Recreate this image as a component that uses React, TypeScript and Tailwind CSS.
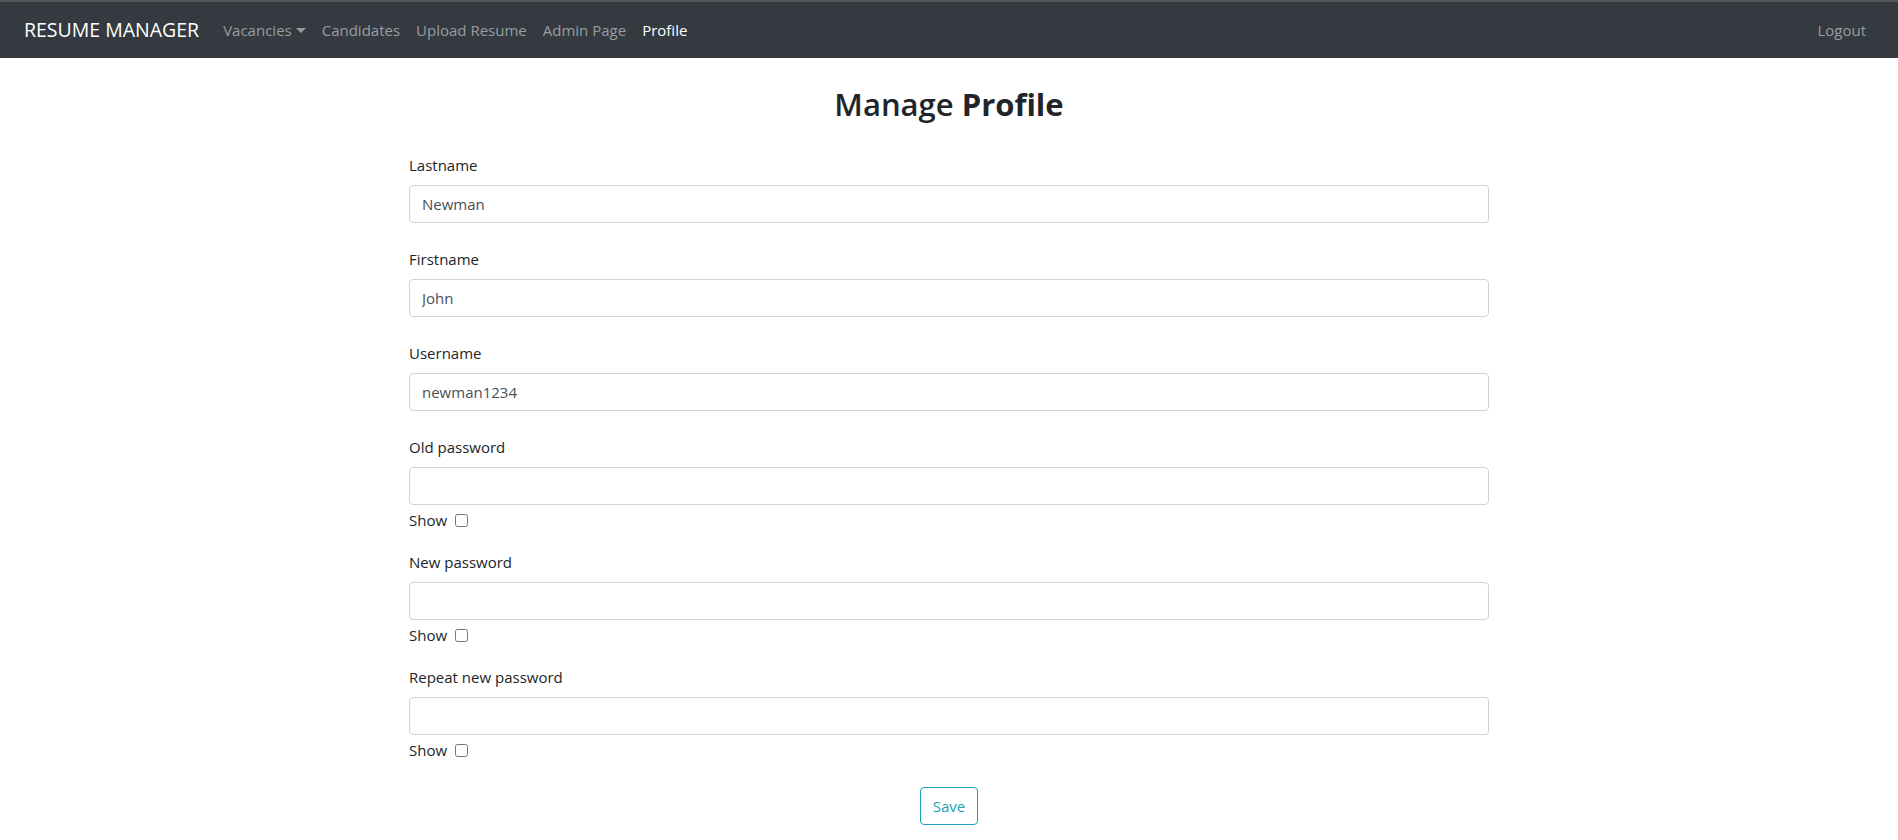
import React, { useState } from 'react';

const navLinks = ['Candidates', 'Upload Resume', 'Admin Page'];

function TextField({ label, value }: { label: string; value?: string }) {
  return (
    <div className="mb-6">
      <label className="block text-[15px] leading-6 mb-2">{label}</label>
      <input
        type="text"
        defaultValue={value}
        className="block w-full h-[38px] px-3 border border-[#ced4da] rounded-[4px] text-[15px] text-[#495057] bg-white outline-none"
      />
    </div>
  );
}

function PasswordField({ label }: { label: string }) {
  const [show, setShow] = useState(false);
  return (
    <div className="mb-[18px]">
      <label className="block text-[15px] leading-6 mb-2">{label}</label>
      <input
        type={show ? 'text' : 'password'}
        className="block w-full h-[38px] px-3 border border-[#ced4da] rounded-[4px] text-[15px] text-[#495057] bg-white outline-none"
      />
      <div className="flex items-center mt-[3px] leading-6 text-[15px]">
        <span>Show</span>
        <input
          type="checkbox"
          checked={show}
          onChange={() => setShow(!show)}
          className="ml-2 w-[13px] h-[13px]"
        />
      </div>
    </div>
  );
}

export default function App() {
  return (
    <div className="min-h-screen bg-white text-[#212529]" style={{ fontFamily: '"Open Sans", "Noto Sans", sans-serif' }}>
      <nav className="flex items-center h-[58px] px-6 bg-[#343a40] border-t-2 border-[#55595e]">
        <span className="text-[19.5px] text-white mr-4">RESUME MANAGER</span>
        <span className="flex items-center px-2 text-[15px] text-[#9a9da0]">
          Vacancies
          <span className="ml-[4px] w-0 h-0 border-l-[5px] border-r-[5px] border-t-[5px] border-l-transparent border-r-transparent border-t-[#9a9da0]" />
        </span>
        {navLinks.map((l) => (
          <span key={l} className="px-2 text-[15px] text-[#9a9da0]">{l}</span>
        ))}
        <span className="px-2 text-[15px] text-white">Profile</span>
        <span className="ml-auto px-2 text-[15px] text-[#9a9da0]">Logout</span>
      </nav>

      <div className="w-[1080px] mx-auto pt-[28px] pb-8">
        <h2 className="text-center text-[31px] leading-[1.2] font-semibold mb-[30px]">
          Manage <b className="font-bold">Profile</b>
        </h2>
        <TextField label="Lastname" value="Newman" />
        <TextField label="Firstname" value="John" />
        <TextField label="Username" value="newman1234" />
        <PasswordField label="Old password" />
        <PasswordField label="New password" />
        <PasswordField label="Repeat new password" />
        <div className="flex justify-center mt-[25px]">
          <button className="h-[38px] px-3 border border-[#17a2b8] rounded-[4px] text-[15px] text-[#17a2b8] bg-white">
            Save
          </button>
        </div>
      </div>
    </div>
  );
}
